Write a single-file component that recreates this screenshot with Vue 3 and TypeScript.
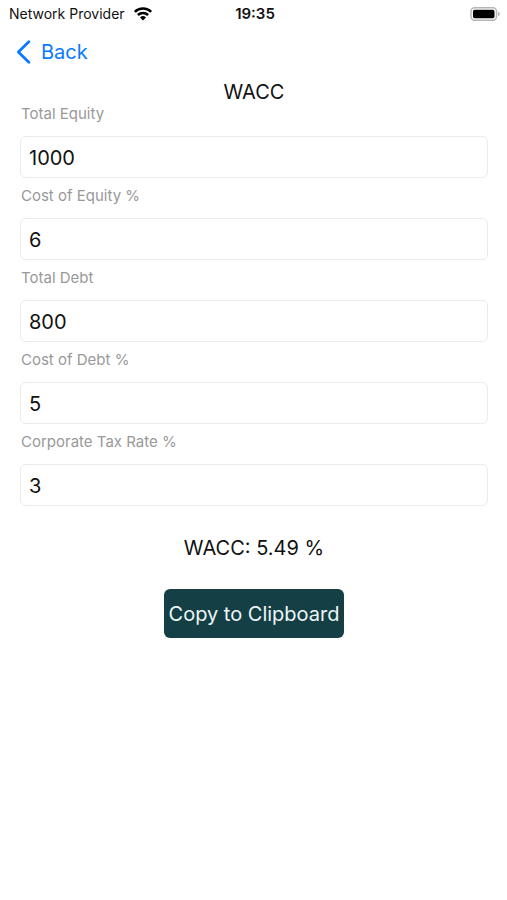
<script setup lang="ts">
import { computed, reactive } from 'vue'

type Key = 'equity' | 'equityCost' | 'debt' | 'debtCost' | 'tax'

const values = reactive<Record<Key, string>>({
  equity: '1000',
  equityCost: '6',
  debt: '800',
  debtCost: '5',
  tax: '3',
})

const fields: { key: Key; label: string }[] = [
  { key: 'equity', label: 'Total Equity' },
  { key: 'equityCost', label: 'Cost of Equity %' },
  { key: 'debt', label: 'Total Debt' },
  { key: 'debtCost', label: 'Cost of Debt %' },
  { key: 'tax', label: 'Corporate Tax Rate %' },
]

const result = computed(() => {
  const equity = Number(values.equity)
  const debt = Number(values.debt)
  const total = equity + debt
  if (!total) return 'WACC: 0.00 %'
  const wacc =
    (equity / total) * Number(values.equityCost) +
    (debt / total) * Number(values.debtCost) * (1 - Number(values.tax) / 100)
  return `WACC: ${wacc.toFixed(2)} %`
})

function copy(): void {
  void navigator.clipboard?.writeText(result.value)
}
</script>

<template>
  <div class="screen">
    <header class="status">
      <div class="carrier">
        <span>Network Provider</span>
        <svg class="wifi" width="20" height="14" viewBox="0 0 20 14" aria-hidden="true">
          <path d="M1.8 4.8a11.8 11.8 0 0 1 16.4 0" />
          <path d="M4.9 8a7.4 7.4 0 0 1 10.2 0" />
          <path class="dot" d="M10 13.4 7 10.4a4.3 4.3 0 0 1 6 0z" />
        </svg>
      </div>
      <time class="clock">19:35</time>
      <svg class="battery" width="31" height="14" viewBox="0 0 31 14" aria-hidden="true">
        <rect class="shell" x="1" y="0.8" width="25.5" height="12.4" rx="3.6" />
        <rect x="3" y="2.8" width="21.5" height="8.4" rx="1.6" />
        <path class="cap" d="M28 4.8c2.4.6 2.4 3.8 0 4.4z" />
      </svg>
    </header>

    <nav class="nav">
      <a class="back" href="#">
        <svg width="15" height="24" viewBox="0 0 15 24" aria-hidden="true">
          <path d="M12.8 1.8 2.4 12l10.4 10.2" />
        </svg>
        <span>Back</span>
      </a>
    </nav>

    <main class="content">
      <h1 class="title">WACC</h1>
      <form class="form" @submit.prevent="copy">
        <div v-for="field in fields" :key="field.key" class="field">
          <label :for="field.key">{{ field.label }}</label>
          <input :id="field.key" v-model="values[field.key]" type="text" inputmode="decimal" />
        </div>
        <output class="result">{{ result }}</output>
        <button class="copy" type="submit">Copy to Clipboard</button>
      </form>
    </main>
  </div>
</template>

<style>
body {
  background: #fff;
}
</style>

<style scoped>
.screen {
  font-family: Inter, "Liberation Sans", sans-serif;
  color: #111;
}

.status {
  display: grid;
  grid-template-columns: 1fr auto 1fr;
  align-items: center;
  height: 28px;
  padding: 0 6px 0 9px;
  font-size: 14px;
  line-height: 20px;
}

.carrier {
  display: flex;
  align-items: center;
  gap: 8px;
}

.wifi path {
  fill: none;
  stroke: #000;
  stroke-width: 2.5;
}

.wifi .dot {
  fill: #000;
  stroke: none;
}

.clock {
  font-size: 15px;
  font-weight: 600;
}

.battery {
  justify-self: end;
}

.battery .shell {
  fill: none;
  stroke: #b5b5b5;
  stroke-width: 1.4;
}

.battery .cap {
  fill: #b5b5b5;
}

.nav {
  display: flex;
  align-items: center;
  height: 48px;
  padding: 0 16px;
}

.back {
  display: flex;
  align-items: center;
  gap: 10px;
  color: #0a7aff;
  font-size: 20px;
  line-height: 24px;
  text-decoration: none;
}

.back path {
  fill: none;
  stroke: currentColor;
  stroke-width: 2.8;
  stroke-linecap: round;
  stroke-linejoin: round;
}

.content {
  padding: 4px 19px 20px 20px;
}

.title {
  margin: 0;
  font-size: 20px;
  font-weight: 400;
  line-height: 24px;
  text-align: center;
}

.form {
  display: flex;
  flex-direction: column;
  gap: 8px;
}

.field {
  display: flex;
  flex-direction: column;
  gap: 12px;
}

.field label {
  padding-left: 1px;
  color: #999;
  font-size: 15px;
  line-height: 20px;
}

.field input {
  box-sizing: border-box;
  width: 100%;
  height: 42px;
  padding: 2px 8px 0;
  border: 1px solid #ebebeb;
  border-radius: 6px;
  background: #fff;
  color: #111;
  font: inherit;
  font-size: 20px;
}

.result {
  margin-top: 22px;
  font-size: 20px;
  line-height: 24px;
  text-align: center;
}

.copy {
  align-self: center;
  height: 49px;
  margin-top: 21px;
  padding: 0 5px;
  border: 0;
  border-radius: 6px;
  background: #143f45;
  color: #eef6f8;
  font: inherit;
  font-size: 20px;
  line-height: 24px;
}
</style>
